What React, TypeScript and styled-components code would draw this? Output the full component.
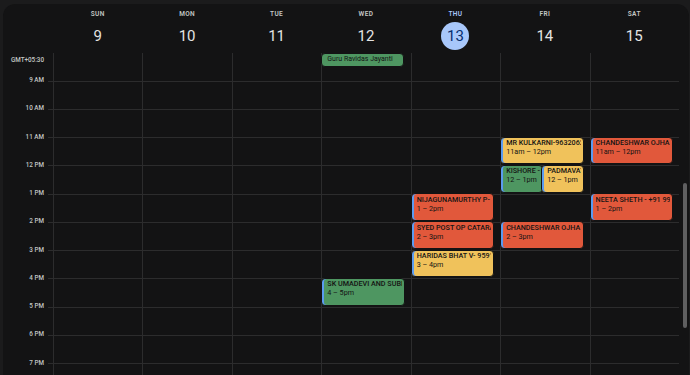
import React from "react";
import styled, { createGlobalStyle, css } from "styled-components";

const HOUR = 28.25;
const FIRST_HOUR = 8;
const HOURS = Array.from({ length: 13 }, (_, i) => FIRST_HOUR + i);
const COLS = "50px repeat(7, minmax(0, 1fr)) 10px";
const LINE = "#2c2c2d";

type Tone = "yellow" | "orange" | "green";
type Slot = "full" | "left" | "right";

const tones: Record<Tone, string> = {
  yellow: "#f0c25b",
  orange: "#e1583b",
  green: "#4e9661",
};

interface CalEvent {
  day: number;
  start: number;
  title: string;
  time: string;
  tone: Tone;
  slot?: Slot;
}

const days = [
  { name: "SUN", date: 9 },
  { name: "MON", date: 10 },
  { name: "TUE", date: 11 },
  { name: "WED", date: 12 },
  { name: "THU", date: 13, today: true },
  { name: "FRI", date: 14 },
  { name: "SAT", date: 15 },
];

const events: CalEvent[] = [
  { day: 5, start: 11, title: "MR KULKARNI-9632062210", time: "11am – 12pm", tone: "yellow" },
  { day: 6, start: 11, title: "CHANDESHWAR OJHA", time: "11am – 12pm", tone: "orange" },
  { day: 5, start: 12, title: "KISHORE - 98450", time: "12 – 1pm", tone: "green", slot: "left" },
  { day: 5, start: 12, title: "PADMAVATHI", time: "12 – 1pm", tone: "yellow", slot: "right" },
  { day: 6, start: 13, title: "NEETA SHETH - +91 99160", time: "1 – 2pm", tone: "orange" },
  { day: 4, start: 13, title: "NIJAGUNAMURTHY P-", time: "1 – 2pm", tone: "orange" },
  { day: 4, start: 14, title: "SYED POST OP CATARACT", time: "2 – 3pm", tone: "orange" },
  { day: 5, start: 14, title: "CHANDESHWAR OJHA", time: "2 – 3pm", tone: "orange" },
  { day: 4, start: 15, title: "HARIDAS BHAT V- 9591", time: "3 – 4pm", tone: "yellow" },
  { day: 3, start: 16, title: "SK UMADEVI AND SUBRAMANYA", time: "4 – 5pm", tone: "green" },
];

function hourLabel(h: number): string {
  if (h === 12) return "12 PM";
  return h > 12 ? `${h - 12} PM` : `${h} AM`;
}

function App(): JSX.Element {
  return (
    <Page>
      <GlobalStyle />
      <Panel>
        <HeaderRow>
          <span />
          {days.map((d) => (
            <DayHead key={d.name}>
              <DayName $today={!!d.today}>{d.name}</DayName>
              <DayNumber $today={!!d.today}>{d.date}</DayNumber>
            </DayHead>
          ))}
          <span />
        </HeaderRow>
        <AllDayRow>
          <ZoneLabel>GMT+05:30</ZoneLabel>
          {days.map((d, i) => (
            <AllDayCell key={d.name}>
              {i === 3 && <AllDayChip>Guru Ravidas Jayanti</AllDayChip>}
            </AllDayCell>
          ))}
          <span />
        </AllDayRow>
        <Body>
          <Gutter>
            {HOURS.map((h) => (
              <HourCell key={h}>
                <HourText>{hourLabel(h)}</HourText>
                <Tick />
              </HourCell>
            ))}
          </Gutter>
          {days.map((d, i) => (
            <DayColumn key={d.name}>
              {HOURS.map((h) => (
                <HourSlot key={h} />
              ))}
              {events
                .filter((e) => e.day === i)
                .map((e) => (
                  <EventCard
                    key={e.title + e.start}
                    $tone={e.tone}
                    $slot={e.slot || "full"}
                    style={{ top: (e.start - FIRST_HOUR) * HOUR - 0.5 }}
                  >
                    <EventTitle>{e.title}</EventTitle>
                    <EventTime>{e.time}</EventTime>
                  </EventCard>
                ))}
            </DayColumn>
          ))}
          <ScrollTrack>
            <ScrollThumb />
          </ScrollTrack>
        </Body>
      </Panel>
    </Page>
  );
}

const GlobalStyle = createGlobalStyle`
  html, body {
    margin: 0;
    padding: 0;
    background: #1b1b1c;
    font-family: Roboto, "Noto Sans", Arial, sans-serif;
  }
`;

const Page = styled.div`
  width: 690px;
  height: 375px;
  box-sizing: border-box;
  padding: 4px 1px 0 3px;
  overflow: hidden;
`;

const Panel = styled.div`
  height: 100%;
  background: #131314;
  border-radius: 12px 12px 0 0;
  display: flex;
  flex-direction: column;
  overflow: hidden;
`;

const HeaderRow = styled.div`
  display: grid;
  grid-template-columns: ${COLS};
  height: 49px;
  flex: none;
`;

const DayHead = styled.div`
  display: flex;
  flex-direction: column;
  align-items: center;
  padding-top: 6px;
`;

const DayName = styled.div<{ $today: boolean }>`
  font-size: 6.5px;
  line-height: 9px;
  font-weight: 600;
  letter-spacing: 0.4px;
  color: ${(p) => (p.$today ? "#a8c7fa" : "#c4c7c5")};
`;

const DayNumber = styled.div<{ $today: boolean }>`
  margin-top: 2.7px;
  width: 28px;
  height: 28px;
  border-radius: 50%;
  display: flex;
  align-items: center;
  justify-content: center;
  font-size: 15px;
  color: #e3e3e3;
  ${(p) =>
    p.$today &&
    css`
      background: #a8c7fa;
      color: #062e6f;
    `}
`;

const AllDayRow = styled.div`
  display: grid;
  grid-template-columns: ${COLS};
  height: 15px;
  flex: none;
`;

const ZoneLabel = styled.div`
  font-size: 6.3px;
  line-height: 15px;
  font-weight: 500;
  color: #c4c7c5;
  text-align: right;
  padding-right: 9px;
  white-space: nowrap;
`;

const AllDayCell = styled.div`
  border-left: 1px solid ${LINE};
  padding-top: 0.3px;
`;

const AllDayChip = styled.div`
  margin-left: -1px;
  width: calc(100% - 6px);
  height: 13.4px;
  box-sizing: border-box;
  border: 1px solid #131314;
  border-radius: 4px;
  background: ${tones.green};
  color: #131314;
  font-size: 7px;
  line-height: 11.4px;
  padding-left: 5px;
  white-space: nowrap;
  overflow: hidden;
`;

const Body = styled.div`
  flex: 1;
  min-height: 0;
  display: grid;
  grid-template-columns: ${COLS};
  align-items: start;
  overflow: hidden;
`;

const Gutter = styled.div`
  margin-top: -15.55px;
`;

const HourCell = styled.div`
  height: ${HOUR}px;
  display: flex;
  justify-content: flex-end;
  align-items: flex-start;
`;

const HourText = styled.span`
  margin-top: -4.5px;
  margin-right: 4px;
  font-size: 6.3px;
  line-height: 9px;
  font-weight: 500;
  color: #c4c7c5;
  white-space: nowrap;
`;

const Tick = styled.span`
  width: 5px;
  border-top: 1px solid ${LINE};
`;

const DayColumn = styled.div`
  position: relative;
  margin-top: -15.55px;
  border-left: 1px solid ${LINE};
`;

const HourSlot = styled.div`
  height: ${HOUR}px;
  box-sizing: border-box;
  border-top: 1px solid ${LINE};
`;

const slotStyles: Record<Slot, ReturnType<typeof css>> = {
  full: css`
    left: -1px;
    width: calc(100% - 5px);
  `,
  left: css`
    left: -1px;
    width: 43px;
  `,
  right: css`
    left: 40px;
    width: calc(100% - 46px);
  `,
};

const EventCard = styled.div<{ $tone: Tone; $slot: Slot }>`
  position: absolute;
  height: ${HOUR - 0.6}px;
  box-sizing: border-box;
  border: 1px solid #131314;
  border-radius: 4px;
  background: ${(p) => tones[p.$tone]};
  box-shadow: inset 2px 0 0 #5b9bf0;
  padding: 1.5px 2px 0 5px;
  overflow: hidden;
  color: #141414;
  ${(p) => slotStyles[p.$slot]}
`;

const EventTitle = styled.div`
  font-size: 7.2px;
  line-height: 8.8px;
  font-weight: 500;
  white-space: nowrap;
  overflow: hidden;
`;

const EventTime = styled.div`
  font-size: 7.2px;
  line-height: 8.8px;
  white-space: nowrap;
`;

const ScrollTrack = styled.div`
  padding: 115px 0 0 3.7px;
`;

const ScrollThumb = styled.div`
  width: 4.5px;
  height: 145px;
  border-radius: 3px;
  background: #5f5f60;
`;

export default App;
